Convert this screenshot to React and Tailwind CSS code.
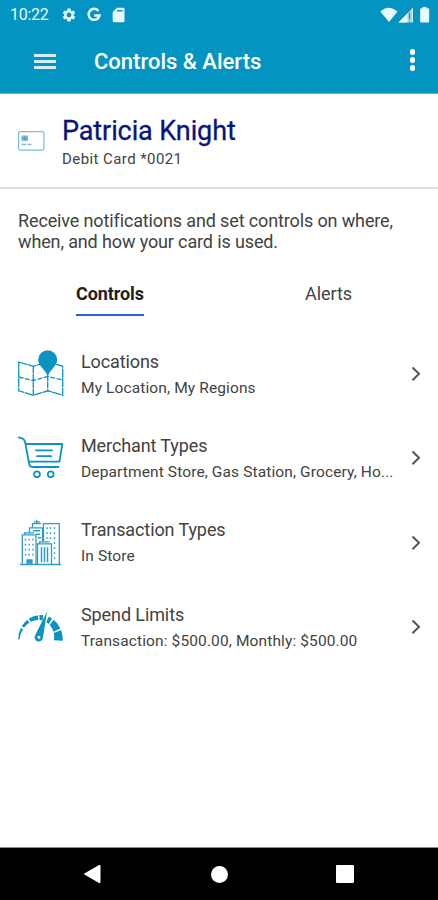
import React from 'react';
import { MdSettings } from 'react-icons/md';

const BLUE = '#0b93bf';

function StatusBar() {
  return (
    <div className="flex h-[28px] items-center pl-[10px] pr-[8px] pt-px text-[#e8f8fd]">
      <span className="w-[39px] whitespace-nowrap text-[16px] leading-none tracking-[-0.25px]">10:22</span>
      <MdSettings className="ml-[12px] size-[16px]" />
      <svg className="ml-[9px] size-[16px]" viewBox="0 0 16 16" fill="none" stroke="currentColor" strokeWidth="2.5">
        <path d="M12.5 4A5.500 5.500 0 1 0 13.500 8.500H8.200" />
      </svg>
      <svg className="ml-[10px] h-[16px] w-[13px]" viewBox="0 0 13 16" fill="currentColor">
        <path fillRule="evenodd" d="M5 .7h6.2q1.3 0 1.3 1.3v12q0 1.3-1.3 1.3H2Q.7 15.300.7 14V5zM5 3v1.500h5.500V3z" />
      </svg>
      <svg className="ml-auto h-[16px] w-[50px]" viewBox="380 6 50 16" fill="currentColor">
        <path d="M380.300 10.600Q388.500 2.800 397.500 10.600L389 20.900z" />
        <path d="M413 6.500V21.500H398.500z" opacity=".65" />
        <path d="M407.500 12.200V21.500H398.500z" />
        <path d="M412.400 7.500V21" stroke="currentColor" />
        <path d="M409.500 12V18" stroke="#0494c1" />
        <path d="M422.500 6h4v1.200h1.700q1 0 1 1v12.300q0 1-1 1h-7q-1 0-1-1V8.200q0-1 1-1h1.300z" />
      </svg>
    </div>
  );
}

function MapIcon() {
  return (
    <svg className="size-[48px]" viewBox="17 350 48 48" fill="none" stroke={BLUE} strokeWidth="1.300">
      <path d="M18.700 362L33.300 366.300 47.700 362 62.700 366.300V395.300L47.700 390.800 33.300 395.300 18.700 390.800z" strokeDasharray="9 .6" />
      <path d="M33.300 366V395M47.700 374V391" strokeDasharray="7 .6" />
      <path d="M18.700 377L33.300 380.500 47.700 376.500 62.700 380" strokeDasharray="5 1.500" />
      <path d="M47.700 374.500C45 368.500 38.900 366 38.900 359.800a8.800 8.800 0 0 1 17.600 0C56.500 366 50.400 368.500 47.700 374.500z" fill={BLUE} />
    </svg>
  );
}

function CartIcon() {
  return (
    <svg className="size-[48px]" viewBox="17 434.300 48 48" fill="none" stroke={BLUE} strokeWidth="1.800" strokeLinecap="round" strokeLinejoin="round">
      <path d="M18.700 437.800L22.300 438.700Q24.300 439.500 25 442L29.200 464.500Q29.700 467.300 32 467.300H58.500" />
      <path d="M26 444.300H62.300L59.500 462H29" />
      <path d="M36 450.700H52M37 456.500H51.300" strokeWidth="1.800" />
      <circle cx="37" cy="474.500" r="2.900" />
      <circle cx="50.700" cy="474.500" r="2.900" />
    </svg>
  );
}

function BuildingsIcon() {
  return (
    <svg className="size-[48px]" viewBox="17 518.700 48 48" fill="none" stroke="#2f9cc8" strokeWidth="1.300">
      <path d="M20 564.200H61" strokeWidth="1.500" />
      <path d="M43.500 541V523.300H59.300V564" />
      <path d="M29.500 533V527.500H42.500V541M32.500 527V523.300H41M36.700 523V519.500M34 521.500h6" />
      <path d="M22.300 564V534.500H36V564M24.500 534v-1.500h9.500" />
      <path d="M37.500 564V543.500H51.500V564M39.500 543v-1.500h10" />
      <path d="M41.500 547V562M44.500 547V562M47.500 547V562" strokeWidth="1.500" />
      <path d="M25.500 538.500V558M29.200 538.500V558M33 538.500V558" strokeDasharray="1.800 3.200" strokeWidth="1.400" />
      <path d="M47 527V540M50.500 527V540M54.500 527V561" strokeDasharray="1.800 3.200" strokeWidth="1.400" />
      <path d="M33 530.500h7M36 534h4M38 537.500h3" strokeWidth="1.400" />
      <path d="M27 563.500v-4h5v4" fill="#2f9cc8" />
    </svg>
  );
}

const gaugeSegments = [[180, 152], [147, 126], [122, 97], [93, 83], [69, 59], [54, 27], [23, -3]];

function gaugePath([from, to]) {
  const point = (angle, inset) => {
    const a = (angle * Math.PI) / 180;
    return `${40.500 + (22.300 - inset) * Math.cos(a)} ${639.500 - (24.500 - inset) * Math.sin(a)}`;
  };
  const inset = (angle) => 1.300 + ((180 - angle) / 180) * 7.500;
  const mid = (from + to) / 2;
  return `M${point(from, 0)}L${point(mid, 0)}L${point(to, 0)}L${point(to, inset(to))}L${point(mid, inset(mid))}L${point(from, inset(from))}Z`;
}

function GaugeIcon() {
  return (
    <svg className="size-[48px]" viewBox="17 603 48 48" fill={BLUE}>
      {gaugeSegments.map((segment) => <path key={segment[0]} d={gaugePath(segment)} />)}
      <path fillRule="evenodd" d="M47 611.500L43 637.500A4.200 4.200 0 1 1 35.300 635zM38.900 635.800a1.500 1.500 0 1 0 0 3 1.500 1.500 0 0 0 0-3z" />
    </svg>
  );
}

const rows = [
  { Icon: MapIcon, title: 'Locations', detail: 'My Location, My Regions' },
  { Icon: CartIcon, title: 'Merchant Types', detail: 'Department Store, Gas Station, Grocery, Ho...' },
  { Icon: BuildingsIcon, title: 'Transaction Types', detail: 'In Store' },
  { Icon: GaugeIcon, title: 'Spend Limits', detail: 'Transaction: $500.00, Monthly: $500.00' },
];

export default function App() {
  return (
    <div className="flex h-[900px] w-[438px] flex-col overflow-hidden bg-white font-[Roboto,sans-serif] text-[#424242]">
      <header className="h-[94px] shrink-0 border-b border-[#55b5d4] bg-[#0494c1] text-white">
        <StatusBar />
        <div className="flex h-[66px] items-center pl-[34px] pr-[23px]">
          <button aria-label="Menu" className="flex w-[22px] flex-col gap-[3px]">
            <span className="h-[3px] bg-[#d5eff8]" />
            <span className="h-[3px] bg-[#d5eff8]" />
            <span className="h-[3px] bg-[#d5eff8]" />
          </button>
          <h1 className="ml-[38px] mt-[2px] whitespace-nowrap text-[22px] font-medium leading-none">Controls &amp; Alerts</h1>
          <button aria-label="More" className="mb-[2px] ml-auto flex flex-col gap-[2.500px]">
            <span className="size-[5.500px] rounded-full bg-white" />
            <span className="size-[5.500px] rounded-full bg-white" />
            <span className="size-[5.500px] rounded-full bg-white" />
          </button>
        </div>
      </header>

      <section className="flex h-[95px] shrink-0 items-center border-b-2 border-[#dedede] pl-[18px]">
        <svg className="h-[20px] w-[27px]" viewBox="0 0 27 20" fill="none" stroke="#78bddb">
          <rect x=".6" y=".6" width="25.300" height="18.500" rx="1.500" strokeWidth="1.200" />
          <rect x="3.500" y="4.500" width="6.500" height="5.500" fill="#78bddb" stroke="none" />
          <path d="M4 7.200h5.500M6.700 5v4.500" stroke="#3b9ac2" strokeWidth=".7" />
          <path d="M3.500 13.500h4.500M9.500 13.500h4" strokeWidth="1.400" />
        </svg>
        <div className="ml-[17px] pt-[3px]">
          <h2 className="whitespace-nowrap text-[27px] leading-[32px] tracking-[-0.1px] text-[#07167a] [-webkit-text-stroke:0.3px_#07167a]">Patricia Knight</h2>
          <p className="mt-[2px] text-[15px] leading-[20px] tracking-[0.42px]">Debit Card *0021</p>
        </div>
      </section>

      <p className="mt-[21px] shrink-0 whitespace-nowrap pl-[18px] text-[18px] leading-[21px] tracking-[-0.13px]">
        Receive notifications and set controls on where,<br />when, and how your card is used.
      </p>

      <nav className="mt-[21px] grid h-[43px] shrink-0 grid-cols-2 text-[18px] leading-[42px]">
        <div className="flex justify-center"><span className="-mb-px ml-px h-[43px] border-b-2 border-[#2563d4] font-bold tracking-[-0.1px] text-[#202020]">Controls</span></div>
        <div className="text-center tracking-[-0.1px]">Alerts</div>
      </nav>

      <main className="mt-[16px] flex flex-col">
        {rows.map(({ Icon, title, detail }) => (
          <button key={title} className="flex h-[84.300px] items-center pl-[17px] pr-[17px] text-left">
            <Icon />
            <span className="ml-[16px] flex flex-col whitespace-nowrap">
              <span className="text-[18px] leading-[24px] tracking-[-0.1px]">{title}</span>
              <span className="mt-[3px] text-[15.500px] leading-[22px] tracking-[0.12px]">{detail}</span>
            </span>
            <svg className="ml-auto h-[16px] w-[10px] shrink-0" viewBox="0 0 10 16" fill="none" stroke="#555" strokeWidth="2">
              <path d="M1.500 1.500L8 7.800 1.500 14.200" />
            </svg>
          </button>
        ))}
      </main>

      <footer className="mt-auto flex h-[53px] shrink-0 items-center border-t border-[#888] bg-black pl-[83px] pr-[83px]">
        <svg className="h-[20px] w-[18px]" viewBox="0 0 18 20" fill="white"><path d="M.5 10L16 1q1.500-.5 1.500 1v16q0 1.500-1.500 1z" /></svg>
        <span className="ml-[110px] size-[17px] rounded-full bg-white" />
        <span className="ml-[108px] size-[18px] rounded-[1px] bg-white" />
      </footer>
    </div>
  );
}
